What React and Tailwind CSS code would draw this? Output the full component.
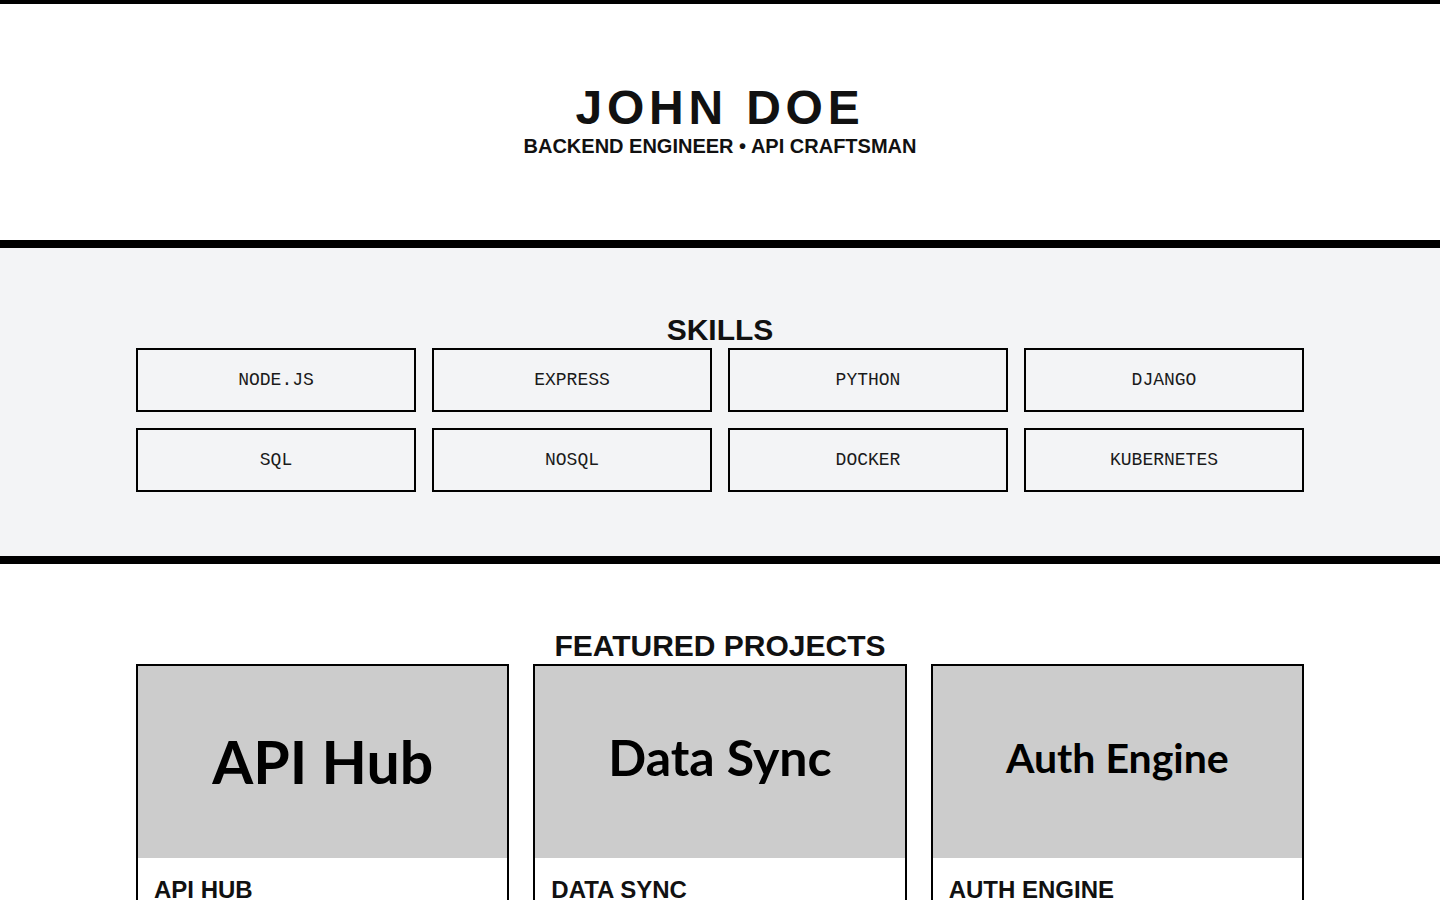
import React from "react";

const skills = [
  "NODE.JS",
  "EXPRESS",
  "PYTHON",
  "DJANGO",
  "SQL",
  "NOSQL",
  "DOCKER",
  "KUBERNETES",
];

const projects = [
  {
    label: "API Hub",
    title: "API HUB",
    size: "text-[59px]",
    nudge: "",
    desc: "A unified gateway for managing, versioning and monitoring REST and GraphQL services.",
    tags: ["NODE.JS", "EXPRESS", "REDIS"],
  },
  {
    label: "Data Sync",
    title: "DATA SYNC",
    size: "text-[50px]",
    nudge: "mb-[10px]",
    desc: "Event-driven pipeline that keeps SQL and NoSQL stores consistent in near real time.",
    tags: ["PYTHON", "KAFKA", "POSTGRES"],
  },
  {
    label: "Auth Engine",
    title: "AUTH ENGINE",
    size: "text-[41px]",
    nudge: "mb-[8px]",
    desc: "OAuth2 and JWT based authentication service with role-based access control.",
    tags: ["DJANGO", "DOCKER", "KUBERNETES"],
  },
];

const App = () => {
  return (
    <div className="min-h-screen bg-white text-[#111] font-['Liberation_Sans',Arial,sans-serif]">
      {/* header */}
      <header className="border-t-4 border-black py-20 text-center">
        <h1 className="text-5xl leading-none font-bold tracking-widest">
          JOHN DOE
        </h1>
        <p className="text-xl leading-7 font-bold">
          BACKEND ENGINEER • API CRAFTSMAN
        </p>
      </header>

      {/* skills */}
      <section className="border-y-8 border-black bg-gray-100 py-16">
        <div className="mx-auto max-w-[1200px] px-4">
          <h2 className="text-center text-3xl font-bold">SKILLS</h2>
          <div className="grid grid-cols-4 gap-4">
            {skills.map((skill) => (
              <div
                key={skill}
                className="flex h-16 items-center justify-center border-2 border-black font-['Liberation_Mono',monospace] text-lg text-[#1a1a1a]"
              >
                {skill}
              </div>
            ))}
          </div>
        </div>
      </section>

      {/* projects */}
      <section className="py-16">
        <div className="mx-auto max-w-[1200px] px-4">
          <h2 className="text-center text-3xl font-bold">FEATURED PROJECTS</h2>
          <div className="grid grid-cols-3 gap-6">
            {projects.map((p) => (
              <div key={p.title} className="border-2 border-black bg-white">
                <div className="flex h-48 items-center justify-center bg-[#cccccc]">
                  <span
                    className={`font-['Lato',sans-serif] font-bold text-black ${p.size} ${p.nudge}`}
                  >
                    {p.label}
                  </span>
                </div>
                <div className="p-4">
                  <h3 className="text-2xl font-bold">{p.title}</h3>
                  <p className="mt-2 text-base text-gray-700">{p.desc}</p>
                  <div className="mt-4 flex gap-2">
                    {p.tags.map((t) => (
                      <span
                        key={t}
                        className="border border-black px-2 py-1 font-['Liberation_Mono',monospace] text-xs"
                      >
                        {t}
                      </span>
                    ))}
                  </div>
                </div>
              </div>
            ))}
          </div>
        </div>
      </section>
    </div>
  );
};

export default App;
